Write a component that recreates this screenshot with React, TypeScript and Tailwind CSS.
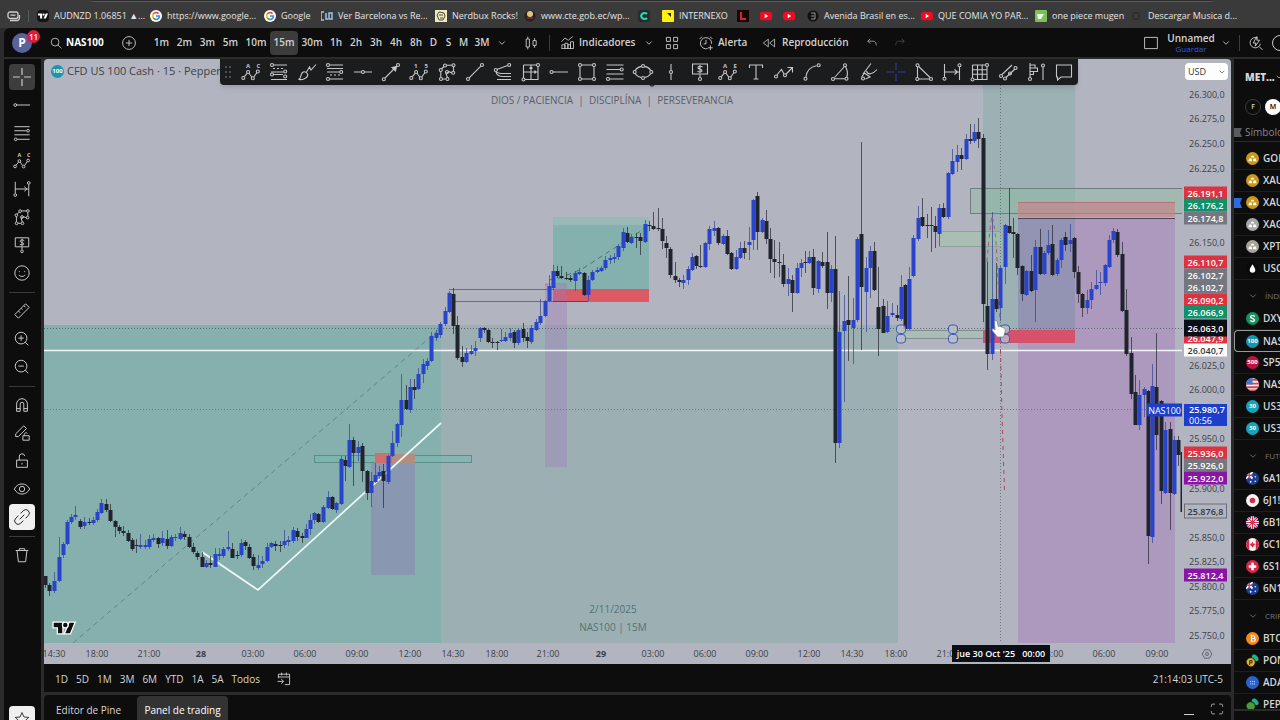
import React from "react";
import { ChevronDown } from "lucide-react";

/* ---------- chart geometry ---------- */
const PLOT = { x: 44, y: 59, w: 1138, h: 584 };
const left = (x: number) => `${((x - PLOT.x) / PLOT.w) * 100}%`;
const top = (y: number) => `${((y - PLOT.y) / PLOT.h) * 100}%`;

/* x, body top, body bottom, high, low, 1 = rising / 0 = falling */
type Candle = [number, number, number, number, number, 0 | 1];
const candles: Candle[] = [
  [45, 576, 585, 576, 588, 0], [49, 585, 591, 583, 596, 0], [54, 581, 591, 572, 593, 1], [59, 557, 581, 537, 582, 1],
  [63, 544, 555, 542, 558, 1], [67, 522, 544, 520, 545, 1], [71, 517, 522, 514, 524, 1], [75, 515, 517, 506, 520, 1],
  [80, 521, 527, 519, 529, 0], [84, 522, 526, 517, 529, 1], [89, 522, 523, 518, 525, 0], [93, 520, 523, 517, 525, 1],
  [97, 512, 520, 509, 522, 1], [101, 503, 513, 499, 514, 1], [106, 504, 510, 499, 512, 0], [110, 510, 521, 504, 522, 0],
  [115, 521, 527, 520, 537, 0], [119, 527, 531, 525, 534, 0], [123, 531, 533, 526, 536, 0], [128, 533, 541, 530, 542, 0],
  [132, 540, 549, 538, 551, 0], [136, 545, 546, 539, 553, 0], [140, 545, 547, 534, 549, 1], [145, 545, 547, 540, 549, 1],
  [149, 539, 547, 535, 549, 1], [153, 538, 540, 534, 542, 1], [158, 538, 544, 537, 548, 0], [162, 538, 543, 531, 546, 1],
  [167, 539, 546, 530, 549, 0], [171, 537, 546, 535, 547, 1], [175, 537, 538, 534, 541, 1], [180, 533, 539, 527, 540, 1],
  [184, 534, 537, 531, 540, 0], [189, 537, 547, 534, 548, 0], [193, 547, 552, 543, 554, 0], [197, 553, 557, 551, 560, 0],
  [202, 557, 567, 552, 567, 0], [206, 563, 567, 560, 568, 1], [210, 563, 565, 556, 568, 0], [215, 554, 567, 548, 567, 1],
  [219, 554, 556, 548, 560, 1], [223, 549, 556, 547, 558, 1], [228, 547, 549, 531, 551, 1], [232, 549, 558, 543, 558, 0],
  [237, 555, 556, 551, 559, 0], [241, 543, 555, 539, 557, 1], [245, 542, 546, 540, 550, 0], [249, 547, 558, 544, 559, 0],
  [253, 557, 566, 554, 570, 0], [258, 565, 568, 555, 570, 1], [262, 561, 564, 556, 568, 1], [267, 547, 561, 543, 562, 1],
  [271, 543, 547, 542, 548, 1], [275, 544, 546, 541, 551, 0], [280, 545, 546, 541, 552, 0], [284, 541, 545, 530, 548, 1],
  [288, 540, 542, 536, 546, 1], [293, 530, 541, 527, 543, 1], [297, 531, 537, 528, 541, 0], [302, 536, 538, 533, 543, 0],
  [306, 529, 538, 524, 538, 1], [310, 520, 529, 514, 535, 1], [314, 513, 520, 512, 524, 1], [318, 514, 522, 513, 523, 0],
  [323, 507, 522, 505, 523, 1], [328, 497, 508, 491, 509, 1], [332, 497, 509, 496, 510, 0], [336, 503, 510, 502, 513, 1],
  [341, 459, 504, 456, 505, 1], [345, 460, 466, 456, 481, 0], [349, 440, 467, 424, 468, 1], [353, 440, 453, 437, 486, 0],
  [358, 447, 453, 441, 461, 1], [362, 446, 471, 443, 482, 0], [367, 471, 493, 470, 500, 0], [371, 481, 493, 472, 507, 1],
  [375, 475, 482, 463, 483, 1], [379, 472, 476, 466, 479, 1], [383, 471, 481, 464, 508, 0], [388, 456, 482, 455, 484, 1],
  [392, 443, 456, 431, 457, 1], [397, 424, 443, 423, 447, 1], [401, 400, 425, 374, 437, 1], [406, 400, 409, 385, 410, 0],
  [410, 387, 410, 379, 413, 1], [414, 387, 390, 379, 399, 0], [418, 374, 389, 368, 390, 1], [423, 364, 374, 359, 383, 1],
  [427, 361, 366, 358, 370, 1], [431, 336, 361, 332, 362, 1], [436, 333, 338, 330, 341, 1], [440, 324, 335, 322, 338, 1],
  [445, 311, 324, 307, 326, 1], [449, 293, 312, 291, 313, 1], [453, 294, 326, 288, 334, 0], [457, 325, 358, 316, 360, 0],
  [462, 357, 362, 346, 367, 0], [466, 353, 362, 348, 363, 1], [471, 351, 354, 345, 355, 1], [475, 348, 351, 341, 356, 1],
  [480, 328, 338, 327, 342, 1], [484, 328, 330, 327, 333, 0], [488, 330, 342, 329, 343, 0], [492, 342, 343, 338, 348, 0],
  [497, 342, 343, 341, 350, 0], [501, 340, 341, 329, 342, 1], [505, 337, 341, 332, 342, 1], [510, 333, 338, 328, 341, 1],
  [514, 332, 343, 330, 348, 0], [518, 330, 343, 328, 345, 1], [523, 329, 338, 323, 342, 0], [527, 337, 341, 332, 348, 0],
  [531, 328, 342, 325, 344, 1], [536, 322, 330, 319, 331, 1], [540, 316, 323, 299, 325, 1], [545, 301, 316, 300, 317, 1],
  [549, 286, 301, 275, 302, 1], [553, 271, 288, 265, 290, 1], [557, 271, 276, 266, 278, 0], [561, 276, 278, 266, 279, 0],
  [566, 278, 279, 272, 280, 0], [570, 278, 280, 275, 282, 0], [575, 273, 281, 271, 291, 1], [579, 272, 274, 268, 275, 1],
  [584, 273, 295, 272, 296, 0], [588, 280, 295, 276, 301, 1], [592, 272, 280, 270, 281, 1], [597, 270, 272, 267, 273, 1],
  [601, 268, 271, 266, 272, 1], [605, 260, 268, 256, 270, 1], [610, 258, 260, 255, 264, 1], [614, 257, 259, 253, 263, 1],
  [618, 246, 257, 244, 260, 1], [623, 232, 248, 228, 251, 1], [627, 233, 242, 227, 243, 0], [631, 237, 243, 234, 244, 1],
  [636, 237, 238, 233, 248, 0], [640, 237, 241, 233, 255, 0], [645, 224, 242, 220, 243, 1], [649, 225, 226, 221, 231, 0],
  [653, 226, 229, 212, 230, 0], [658, 228, 229, 208, 231, 0], [662, 229, 241, 218, 249, 0], [666, 243, 248, 236, 258, 0],
  [670, 249, 275, 247, 278, 0], [675, 276, 280, 262, 283, 0], [679, 280, 282, 278, 287, 0], [683, 280, 283, 275, 289, 1],
  [688, 269, 280, 266, 285, 1], [692, 257, 270, 253, 271, 1], [696, 256, 266, 255, 269, 0], [700, 266, 267, 245, 268, 0],
  [705, 243, 267, 242, 268, 1], [709, 229, 244, 226, 250, 1], [714, 228, 231, 221, 236, 1], [718, 228, 243, 227, 245, 0],
  [723, 236, 244, 234, 245, 1], [727, 236, 254, 230, 255, 0], [731, 253, 269, 252, 270, 0], [736, 257, 269, 250, 270, 1],
  [740, 248, 258, 242, 259, 1], [744, 248, 253, 241, 259, 0], [749, 242, 245, 227, 260, 1], [753, 200, 240, 199, 250, 1],
  [757, 196, 232, 192, 250, 0], [762, 220, 232, 218, 233, 1], [766, 221, 239, 210, 244, 0], [770, 239, 259, 228, 273, 0],
  [774, 259, 262, 240, 278, 0], [779, 262, 263, 242, 277, 0], [783, 265, 284, 254, 287, 0], [788, 279, 284, 268, 296, 1],
  [792, 280, 293, 275, 312, 0], [797, 268, 293, 263, 294, 1], [801, 263, 268, 259, 277, 1], [805, 262, 263, 251, 273, 0],
  [809, 257, 263, 251, 264, 1], [813, 257, 288, 249, 295, 0], [818, 261, 289, 260, 293, 1], [822, 262, 266, 252, 268, 0],
  [827, 262, 293, 232, 309, 0], [831, 269, 293, 265, 302, 1], [835, 269, 443, 236, 463, 0], [839, 332, 443, 291, 448, 1],
  [844, 321, 331, 295, 402, 1], [848, 320, 325, 276, 361, 0], [853, 320, 328, 298, 364, 1], [857, 239, 320, 237, 322, 1],
  [861, 234, 287, 142, 350, 0], [866, 268, 292, 257, 332, 1], [870, 251, 268, 246, 298, 1], [874, 251, 290, 242, 291, 0],
  [878, 307, 329, 267, 356, 0], [883, 306, 333, 299, 333, 0], [887, 316, 332, 301, 333, 1], [892, 313, 315, 303, 317, 1],
  [897, 315, 318, 305, 321, 0], [901, 287, 319, 275, 321, 1], [905, 285, 329, 284, 330, 0], [909, 279, 329, 267, 330, 1],
  [913, 238, 276, 235, 277, 1], [918, 218, 239, 206, 241, 1], [922, 217, 226, 198, 227, 0], [927, 225, 226, 214, 238, 0],
  [931, 225, 226, 207, 252, 0], [935, 226, 232, 216, 248, 0], [939, 208, 234, 204, 246, 1], [943, 208, 217, 203, 218, 0],
  [948, 173, 217, 172, 219, 1], [952, 161, 174, 149, 175, 1], [957, 155, 162, 145, 172, 1], [961, 155, 159, 148, 170, 0],
  [966, 139, 159, 134, 160, 1], [970, 139, 141, 124, 144, 0], [974, 132, 141, 124, 143, 1], [978, 132, 139, 118, 148, 0],
  [983, 138, 304, 134, 322, 0], [987, 306, 354, 262, 370, 0], [992, 299, 354, 212, 360, 1], [996, 299, 309, 263, 312, 0],
  [1000, 268, 308, 266, 321, 1], [1005, 225, 267, 224, 284, 1], [1009, 226, 233, 188, 234, 0], [1013, 232, 234, 218, 258, 0],
  [1017, 234, 268, 233, 275, 0], [1022, 266, 294, 265, 301, 0], [1026, 271, 295, 270, 296, 1], [1031, 271, 291, 255, 292, 0],
  [1035, 247, 290, 240, 322, 1], [1040, 247, 274, 229, 275, 0], [1044, 253, 274, 251, 275, 1], [1048, 245, 253, 230, 255, 1],
  [1052, 244, 275, 225, 276, 0], [1057, 260, 274, 258, 276, 1], [1061, 240, 260, 238, 268, 1], [1065, 237, 245, 232, 251, 0],
  [1070, 240, 244, 224, 252, 1], [1074, 238, 272, 237, 278, 0], [1078, 272, 294, 266, 303, 0], [1082, 294, 308, 293, 317, 0],
  [1087, 300, 308, 290, 314, 1], [1091, 289, 300, 282, 309, 1], [1096, 285, 289, 270, 290, 1], [1100, 282, 283, 272, 295, 1],
  [1105, 265, 283, 264, 286, 1], [1109, 240, 267, 235, 268, 1], [1113, 231, 240, 228, 243, 1], [1117, 232, 255, 229, 257, 0],
  [1122, 254, 311, 242, 312, 0], [1126, 310, 354, 289, 356, 0], [1131, 353, 394, 337, 399, 0], [1135, 392, 425, 375, 425, 0],
  [1139, 395, 425, 380, 430, 1], [1144, 389, 395, 387, 417, 1], [1148, 391, 536, 390, 564, 0], [1152, 386, 537, 364, 543, 1],
  [1156, 387, 435, 333, 450, 0], [1161, 401, 491, 400, 504, 0], [1165, 430, 493, 422, 494, 1], [1170, 429, 493, 422, 530, 0],
  [1174, 440, 494, 436, 495, 1], [1178, 440, 455, 436, 466, 0], [1182, 452, 512, 451, 512, 0],
];

const Rect = ({ b, fill, o = 1, stroke }: { b: number[]; fill: string; o?: number; stroke?: string }) => (
  <rect x={b[0]} y={b[1]} width={b[2] - b[0]} height={b[3] - b[1]} fill={fill} fillOpacity={o} stroke={stroke} strokeWidth={stroke ? 1 : 0} />
);

const Plot = () => (
  <svg className="absolute inset-0 h-full w-full" viewBox={`${PLOT.x} ${PLOT.y} ${PLOT.w} ${PLOT.h}`} preserveAspectRatio="none" role="img" aria-label="NAS100, 15 minutos">
    <Rect b={[44, 325, 441, 643]} fill="#85b0ad" />
    <Rect b={[441, 325, 898, 643]} fill="#9cb0b4" />
    <Rect b={[553, 217, 649, 226]} fill="#99b8b8" />
    <Rect b={[553, 225, 649, 290]} fill="#84b1ad" />
    <Rect b={[553, 289, 649, 302]} fill="#dc5a64" />
    <Rect b={[545, 283, 567, 467]} fill="#a078b8" o={0.38} />
    <Rect b={[371, 463, 415, 575]} fill="#8997b0" />
    <Rect b={[314.5, 455.5, 471.5, 462.5]} fill="#6fbcae" o={0.4} stroke="#5c8c8b" />
    <Rect b={[375, 453, 392, 463]} fill="#cf6f6c" />
    <Rect b={[392, 454, 415, 463]} fill="#b08f80" />
    <Rect b={[983, 59, 1075, 330]} fill="#9bb1b4" />
    <Rect b={[1018, 218, 1175, 643]} fill="#ac99bd" />
    <Rect b={[1018, 218, 1075, 330]} fill="#9393b4" />
    <Rect b={[970.5, 188.5, 1200, 213.5]} fill="#8fbc9f" o={0.45} stroke="#6f7c85" />
    <Rect b={[1018, 202, 1175, 217]} fill="#c98287" o={0.65} />
    <path d="M1018 202.5H1175" stroke="#b5727d" />
    <path d="M1018 218.5H1175" stroke="#4a4656" />
    <Rect b={[939, 231.5, 1001, 246.5]} fill="#9fc9a8" o={0.5} />
    <path d="M939 231.5H1001M939 246.5H1001" stroke="#8aa297" fill="none" />
    <Rect b={[901, 330, 985, 338]} fill="#9fc9b0" o={0.4} />
    <path d="M901 330.5H985M901 338.5H985" stroke="#7f8f90" />
    <Rect b={[983, 330, 1075, 343]} fill="#d6526a" />
    <path d="M449 289.5H553M453 301.5H553" stroke="#6b6e77" />
    <path d="M553 301.5H588" stroke="#6d3c46" />
    <path d="M73 643L441 328" stroke="#638584" strokeDasharray="5 4" fill="none" />
    <path d="M549 280L560 278L582 269L647 227" stroke="#4f7573" strokeDasharray="5 4" fill="none" />
    <path d="M545 285L553 283L565 284" stroke="#c97878" strokeDasharray="3 3" fill="none" />
    <path d="M44 350.5H1182" stroke="#f2f5f7" strokeWidth="1.4" />
    <path d="M44 409.5H1148" stroke="#5b78b8" strokeDasharray="1 2" />
    <path d="M44 328.5H1182" stroke="#5c6a72" strokeDasharray="1 2" />
    <path d="M1000.5 85V643" stroke="#6d7780" strokeDasharray="1 2" />
    <path d="M202 552L258 590L441 423" stroke="#eef8f7" strokeWidth="1.7" fill="none" />
    {candles.map(([x, t, b, hi, lo, up]) => (
      <g key={x} fill={up ? "#2843cc" : "#20242f"}>
        <rect x={x} y={hi} width={1} height={lo - hi} fill={up ? "#39499a" : "#2c3038"} fillOpacity={0.75} />
        <rect x={x - 1.5} y={t} width={4} height={Math.max(1, b - t)} />
      </g>
    ))}
    <path d="M987 262Q990 225 992 216Q996 230 997 262L1000 320" stroke="#b0566f" strokeDasharray="4 4" fill="none" />
    <path d="M1000.5 350L1002 415L1004.500 491" stroke="#b5405c" strokeDasharray="4 4" fill="none" />
    {[901, 953, 1005].map((x) => (
      <g key={x} fill="#b9bfca" fillOpacity="0.8" stroke="#3b56b5">
        <rect x={x - 4.5} y={325} width={9} height={8.5} rx={3} />
        <rect x={x - 4.5} y={334.5} width={9} height={8.5} rx={3} />
      </g>
    ))}
    <path d="M994.500 321c1.600-.8 2.800.2 3 1.500l.7 4 1-.3c1 0 1.500.3 2 .8 1-.2 1.800.2 2.200 1 1.300 0 1.800.8 1.800 1.800 0 2.600-.7 4.200-1.700 7.200h-6.200c-1.600-2.500-3.800-4.500-5.200-6.800-.2-1.600 1.600-1.800 3-.4z" fill="#fff" stroke="#70757f" strokeWidth=".7" />
    <path d="M650 85q2 2 4 0" stroke="#3c3f49" strokeWidth="1.5" fill="none" />
  </svg>
);

/* ---------- drawing-tool icons ---------- */
type IconDef = { d: string; n?: number[][]; l?: [string, string]; cls?: string; f?: string };
const ZIGZAG = { d: "M3.300 14.700L6.200 11.300M8 11.300L10.700 15M12.800 15L15.800 10.700", n: [[2.300, 16], [7.100, 10], [11.800, 16.200], [16.800, 9.500]] };
const I: Record<string, IconDef> = {
  abc: { ...ZIGZAG, l: ["A", "C"] },
  wave: { ...ZIGZAG, l: ["1", "5"] },
  abe: { d: "M3.300 14.700L6.200 11.300M8 11.300L10.700 15M12.800 15L15.800 10.700", n: [[2.300, 16], [7.100, 10], [11.800, 16.200], [16.800, 9.500]], l: ["A", "E"] },
  fibext: { d: "M4.600 3H18M4 6.500H6M8 6.500H10M12 6.500H14M2 10H14.500M4.600 12.500H14M2 17.500H18", n: [[3, 3], [16.200, 9.500], [3, 12.500], [16.200, 14.500]] },
  fibtime: { d: "M4.600 3H18M2 6.500H18M2 10H14.500M5 13H7M9 13H11M13 13H15M4.600 17H18", n: [[3, 3], [16.200, 10], [3, 17]] },
  brush: { d: "M1.500 17.500C4.500 16.500 3 13 5.500 10.500C7.500 8.500 11.500 11 10.500 14C9.500 17 5 18 1.500 17.500ZM9.500 10L12.500 5L14 8L19 2.500" },
  hline: { d: "M1 10H8.300M11.700 10H19", n: [[10, 10]] },
  arrow: { d: "M4 16L15.500 4.500", n: [[2.800, 17.200], [17, 3]], f: "M15.500 4.500L14.500 9L11 5.500Z" },
  path: { d: "M4.500 7L7 4.500M9.600 3.300L14.900 3.200M16.500 5V9M15 11L12 9.700L9 11.500L10.500 15.800M8.800 17H5.500M3.800 15.400V9.700", n: [[3.700, 8], [8, 3.500], [16.500, 3.300], [16.200, 10.700], [10, 10], [10.500, 17], [4, 17]] },
  trend: { d: "M4.200 15.800L15.800 4.200", n: [[3, 17], [17, 3]] },
  fan: { d: "M4 7.500L14.500 3.500M3 9.500C5 12 8 11.500 18 11.500M3 10C4 15 8 14.500 18 14.500M4 17.500H18", n: [[2.800, 8], [16.200, 3]] },
  pos: { d: "M2.500 3H15.500M17 4.500V17.500H4M2.500 16V3M10 3V17.500M2.500 10H17M8.500 6.500L10 5L11.500 6.500M13.500 8.500L15 10L13.500 11.500", n: [[17, 3], [2.500, 17.500]] },
  ray: { d: "M4 10H19", n: [[2.500, 10]] },
  rect: { d: "M4.700 3H15.300M4.700 17H15.300M3 4.700V15.300M17 4.700V15.300", n: [[3, 3], [17, 3], [3, 17], [17, 17]] },
  fib: { d: "M1.500 3H18.500M1.500 7.500H15M1.500 12H18.500M4.700 17H18.500", n: [[16.700, 7.500], [3, 17]] },
  ellipse: { d: "M2 8.500C3.500 6.500 6 4.700 8.500 4.400M11.500 4.400C14 4.700 16.500 6.500 18 8.500M2 11.500C3.500 13.500 6 15.300 8.500 15.600M11.500 15.600C14 15.300 16.500 13.500 18 11.500", n: [[1.700, 10], [18.300, 10], [10, 4], [10, 16]] },
  vline: { d: "M10 2V8.300M10 11.700V18", n: [[10, 10]] },
  note: { d: "M2.500 2H17.500V12H2.500ZM10 12V15M12.500 5.200C11 3.700 7.500 4.200 8 6C8.500 7.700 12 7 12 8.700C12 10.200 9 10.500 7.500 9.200M10 3V11", n: [[10, 17]] },
  text: { d: "M3.500 6V3H16.500V6M10 3V17M7.500 17H12.500" },
  zig: { d: "M3 13L6 9L7.500 7.500L10 12M12.200 12L18 6M13.500 5.500H18.500V10.500", n: [[2, 14.500], [11, 13.300]] },
  arc: { d: "M4 15C4.500 9 8 5 14.500 3.700", n: [[3.500, 16.700], [16.700, 3.200]] },
  shape: { d: "M4.500 15.500L14 5M5 16.700H14.800M15.500 4.800C17.500 8 17.800 12 16.800 15.200", n: [[3, 17], [15, 3.200], [16.500, 16.800]] },
  pitch: { d: "M5 12L13 1.500M3.700 15L6.500 11L12 15L7.500 17M8.500 9C10 13.500 14.500 12.500 19 7.500", n: [[5, 16.500]] },
  cross: { d: "M10 1V8M10 12V19M1 10H8M12 10H19", cls: "text-[#3038b8]" },
  tri: { d: "M3.500 5V15.300M5 17H15.300M4.700 4.500L16 15.500", n: [[3.500, 3.200], [3.300, 17], [17, 17]] },
  range: { d: "M2.500 2V15M17.500 5V18M2.500 10H17M12.500 7.500L15.500 10L12.500 12.500", n: [[2.500, 16.700], [17.500, 3.300]] },
  grid: { d: "M2.500 3H15.300M17 4.700V17.500H4.200M2.500 15.800V3M2.500 7.700H17M2.500 12.300H17M7.500 3V17.500M12.200 3V17.500", n: [[17, 3], [2.500, 17.500]] },
  channel: { d: "M4 12.500L14 3M8 15.500L17 7", n: [[3, 14], [7, 16.500], [12, 11.500], [17.500, 6]] },
  vp: { d: "M4 1V15.500M4 3H9V6H4M4 6H11.500V9.500H4M4 12.500H7.500V9.500M17 5V18", n: [[17, 3.500], [4, 17]] },
  comment: { d: "M2.500 3H17.500V15H7L3.500 18V15H2.500Z" },
  smile: { d: "M10 2A8 8 0 1 0 10 18A8 8 0 1 0 10 2ZM7 8V9M13 8V9M6.500 12C8 14.500 12 14.500 13.500 12" },
  ruler: { d: "M2 14L14 2L18 6L6 18ZM6 10L8 12M9 7L10.500 8.500M12 4L14 6" },
  zin: { d: "M9 2.500A6.500 6.500 0 1 0 9 15.500A6.500 6.500 0 1 0 9 2.500ZM13.500 13.500L17 17M6 9H12M9 6V12" },
  zout: { d: "M9 2.500A6.500 6.500 0 1 0 9 15.500A6.500 6.500 0 1 0 9 2.500ZM13.500 13.500L17 17M6 9H12" },
  magnet: { d: "M4 17V9A6 6 0 0 1 16 9V17H12V9A2 2 0 0 0 8 9V17ZM4 14H8M12 14H16" },
  penlock: { d: "M3 14L3 11L12 2L15 5L6 14ZM11 13H18V18H11ZM12.500 13V11.500A2 2 0 0 1 16 10.500" },
  lock: { d: "M4 9H16V17H4ZM7 9V5.500A3 3 0 0 1 13 4.500M10 12V14" },
  eye: { d: "M1.500 10C5 2.500 15 2.500 18.500 10C15 17.500 5 17.500 1.500 10ZM10 7A3 3 0 1 0 10 13A3 3 0 1 0 10 7Z" },
  link: { d: "M8.500 6L11.500 3A3.500 3.500 0 0 1 17 8.500L14 11.500M11.500 14L8.500 17A3.500 3.500 0 0 1 3 11.500L6 8.500M7.500 12.500L12.500 7.500" },
  trash: { d: "M3 5H17M7 5V3H13V5M4.500 5L6 17.500H14L15.500 5" },
  star: { d: "M10 2L12.500 7.500L18.500 8L14 12L15.500 18L10 15L4.500 18L6 12L1.500 8L7.500 7.500Z" },
  search: { d: "M8.500 2A6.500 6.500 0 1 0 8.500 15A6.500 6.500 0 1 0 8.500 2ZM13 13L19 19" },
  plus: { d: "M10 2A8 8 0 1 0 10 18A8 8 0 1 0 10 2ZM6 10H14M10 6V14" },
  bars: { d: "M4 5H8V15H4ZM6 2V5M6 15V18M12.500 7H16.500V13H12.500ZM14.500 4V7M14.500 13V16" },
  indic: { d: "M2.500 18V13H6.500V18M6.500 18V11H10.500V18M10.500 18V13H14V18M14 18V9H18V18M2 18H18M2 9L6.500 4L11 7L17 2" },
  four: { d: "M3 3H8V8H3ZM12 3H17V8H12ZM3 12H8V17H3ZM12 12H17V17H12Z" },
  alarm: { d: "M12 17A7 7 0 1 1 17 11M10 6V11H7M2 5L5 2M15 2L18 5M15.500 13V19M12.500 16H18.500" },
  rewind: { d: "M9 4.500V15.500L2 10ZM18 4.500V15.500L11 10Z" },
  undo: { d: "M7 3L3 7L7 11M3 7H12C16 7 17 10 17 14" },
  redo: { d: "M13 3L17 7L13 11M17 7H8C4 7 3 10 3 14" },
  layout: { d: "M2 3H18V17H2Z" },
  bolt: { d: "M12.500 4A6.500 6.500 0 1 0 15.500 11M14 14.500L18 18.500M11 2L6.500 10H10L9 14L14.500 6.500H11Z" },
  calendar: { d: "M3 9V4H17V17H11M3 7.500H17M7 2V5.500M13 2V5.500M2 13H9M6.500 10L9.500 13L6.500 16" },
  full: { d: "M2 7V5Q2 3 4 3H7M13 3H16Q18 3 18 5V7M18 13V15Q18 17 16 17H13M7 17H4Q2 17 2 15V13" },
  gear: { d: "M6 3H14L18 10L14 17H6L2 10ZM10 7.500A2.500 2.500 0 1 0 10 12.500A2.500 2.500 0 1 0 10 7.500Z" },
};

const Icon = ({ name, className = "h-5 w-5" }: { name: string; className?: string }) => {
  const i = I[name];
  return (
    <svg viewBox="0 0 20 20" className={`shrink-0 overflow-visible ${className} ${i.cls ?? ""}`} fill="none" stroke="currentColor" strokeWidth="1.1" aria-hidden="true">
      <path d={i.d} />
      {i.f && <path d={i.f} fill="currentColor" />}
      {i.n?.map(([x, y]) => <circle key={`${x}-${y}`} cx={x} cy={y} r="1.5" />)}
      {i.l && (
        <g fill="currentColor" stroke="none" fontSize="6" fontWeight="700">
          <text x="5" y="5.500">{i.l[0]}</text>
          <text x="15.500" y="5.500">{i.l[1]}</text>
        </g>
      )}
    </svg>
  );
};

/* ---------- bookmarks ---------- */
const Google = () => (
  <svg viewBox="0 0 14 14" className="h-3 w-3 shrink-0"><circle cx="7" cy="7" r="7" fill="#fff" />
    <g fill="none" strokeWidth="1.900"><path d="M10 4.200A4 4 0 0 0 3.600 5" stroke="#ea4335" /><path d="M3.600 5A4 4 0 0 0 3.600 9" stroke="#fbbc05" /><path d="M3.600 9A4 4 0 0 0 9.500 10.200" stroke="#34a853" /><path d="M9.500 10.200A4 4 0 0 0 11 7H7" stroke="#4285f4" /></g></svg>
);
const YouTube = () => (
  <svg viewBox="0 0 14 14" className="h-3 w-3 shrink-0"><rect y="2" width="14" height="10" rx="3" fill="#f00a22" /><path d="M5.500 4.500L9.500 7L5.500 9.500Z" fill="#fff" /></svg>
);
const TvMark = ({ className }: { className: string }) => (
  <svg viewBox="0 0 24 12" className={className}><path d="M0 0H10V12H5V5H0ZM24 0L19 12H13.500L18.500 0Z" fill="currentColor" /><circle cx="13.500" cy="2.600" r="2.600" fill="currentColor" /></svg>
);
const bookmarks: { w: string; icon: React.ReactNode; t?: string }[] = [
  { w: "w-[113px]", icon: <span className="flex h-3 w-3 shrink-0 items-center justify-center rounded-sm bg-[#131313]"><TvMark className="h-1.5 w-2.5 text-white" /></span>, t: "AUDNZD 1.06851 ▲..." },
  { w: "w-[114px]", icon: <Google />, t: "https://www.google..." },
  { w: "w-[57px]", icon: <Google />, t: "Google" },
  { w: "w-[114px]", icon: <svg viewBox="0 0 12 12" className="h-3 w-3 shrink-0"><path d="M3 2H0V10H3M5 3V9H7M8 3H11V9H8Z" fill="none" stroke="#9fc4e8" strokeWidth="1.500" /></svg>, t: "Ver Barcelona vs Re..." },
  { w: "w-[89px]", icon: <svg viewBox="0 0 12 12" className="h-3 w-3 shrink-0"><rect width="12" height="12" fill="#efe9c4" /><path d="M2 5L4 2L9 3L10 6L8 10H4ZM4 5H8M5 8H8" fill="none" stroke="#4d4a33" /></svg>, t: "Nerdbux Rocks!" },
  { w: "w-[114px]", icon: <svg viewBox="0 0 12 12" className="h-3 w-3 shrink-0"><circle cx="6" cy="6" r="5.500" fill="#2b2020" /><circle cx="6" cy="4" r="3" fill="#e0c589" /><path d="M3 8H9" stroke="#c0392b" /></svg>, t: "www.cte.gob.ec/wp..." },
  { w: "w-6", icon: <svg viewBox="0 0 12 12" className="h-3 w-3 shrink-0"><rect width="12" height="12" rx="3" fill="#262a2a" /><path d="M9 4A3.300 3 0 1 0 9 8" fill="none" stroke="#27d7a8" strokeWidth="2.200" /></svg> },
  { w: "w-[75px]", icon: <svg viewBox="0 0 12 12" className="h-3 w-3 shrink-0"><rect width="12" height="12" rx="1" fill="#fbf010" /><path d="M5 3H9V7Z" fill="#222" /></svg>, t: "INTERNEXO" },
  { w: "w-[23px]", icon: <svg viewBox="0 0 12 12" className="h-3 w-3 shrink-0"><rect width="12" height="12" fill="#160707" /><path d="M4 2V9H9" fill="none" stroke="#e02222" strokeWidth="2" /></svg> },
  { w: "w-[23px]", icon: <YouTube /> },
  { w: "w-6", icon: <YouTube /> },
  { w: "w-[114px]", icon: <svg viewBox="0 0 12 12" className="h-3 w-3 shrink-0"><circle cx="6" cy="6" r="5.500" fill="#111" /><path d="M4 3H8V9H4M4 6H7" fill="none" stroke="#999" /></svg>, t: "Avenida Brasil en es..." },
  { w: "w-[114px]", icon: <YouTube />, t: "QUE COMIA YO PAR..." },
  { w: "w-24", icon: <svg viewBox="0 0 12 12" className="h-3 w-3 shrink-0"><rect width="12" height="12" rx="1" fill="#7cc05a" /><path d="M2 4H9L6 9H3Z" fill="#eef7e6" /></svg>, t: "one piece mugen" },
  { w: "w-[114px]", icon: <svg viewBox="0 0 12 12" className="h-3 w-3 shrink-0"><circle cx="5" cy="6" r="3.500" fill="none" stroke="#222" /></svg>, t: "Descargar Musica d..." },
];

/* ---------- top bar ---------- */
const frames: [string, string][] = [
  ["1m", "w-[23px]"], ["2m", "w-[23px]"], ["3m", "w-[23px]"], ["5m", "w-[23px]"], ["10m", "w-7"], ["15m", "w-7"], ["30m", "w-7"],
  ["1h", "w-5"], ["2h", "w-5"], ["3h", "w-5"], ["4h", "w-5"], ["8h", "w-5"], ["D", "w-[15px]"], ["S", "w-[15px]"], ["M", "w-[15px]"], ["3M", "w-[22px]"],
];
const Sep = () => <span className="h-4 w-px shrink-0 bg-[#3b3b3b]" />;
const Chevron = ({ className }: { className: string }) => (
  <button aria-label="Más opciones" className={`flex shrink-0 justify-center ${className}`}><ChevronDown className="h-2.5 w-2.5" /></button>
);

const TopBar = () => (
  <header className="ml-1 flex h-[29px] shrink-0 items-center overflow-hidden rounded-tl-md bg-[#0d0d0d] text-[10px] font-semibold text-[#d2d2d2]">
    <button aria-label="Perfil" className="relative flex h-full w-9 shrink-0 items-center pl-2">
      <span className="flex h-5 w-5 items-center justify-center rounded-full bg-[#5a629c] text-xs font-bold text-white">P</span>
      <span className="absolute top-0.5 right-0 flex h-[13px] w-[13px] items-center justify-center rounded-full bg-[#e0193f] text-[8px] text-white">11</span>
    </button>
    <button className="flex w-[74px] shrink-0 items-center gap-1 pl-2 font-bold text-white">
      <Icon name="search" className="ml-0.5 h-3 w-3" />NAS100
    </button>
    <button aria-label="Comparar" className="flex w-[29px] shrink-0 justify-center"><Icon name="plus" className="h-4 w-4" /></button>
    <span className="ml-[3px]"><Sep /></span>
    <nav className="ml-1 flex items-center">
      {frames.map(([t, w]) => (
        <button key={t} className={`flex h-6 shrink-0 items-center justify-center rounded ${w} ${t === "15m" ? "bg-[#3c3c3c]" : ""}`}>{t}</button>
      ))}
    </nav>
    <Chevron className="w-[18px]" />
    <span className="ml-0.5"><Sep /></span>
    <button aria-label="Velas" className="flex w-9 shrink-0 justify-center"><Icon name="bars" className="h-4 w-4" /></button>
    <Sep />
    <button className="ml-2.5 flex w-[78px] shrink-0 items-center gap-1"><Icon name="indic" className="h-[15px] w-[15px]" />Indicadores</button>
    <Chevron className="w-[22px]" />
    <button aria-label="Plantillas" className="flex w-6 shrink-0 justify-center"><Icon name="four" className="h-4 w-4" /></button>
    <span className="ml-1.5"><Sep /></span>
    <button className="ml-2 flex w-16 shrink-0 items-center gap-1"><Icon name="alarm" className="h-4 w-4" />Alerta</button>
    <button className="flex w-[86px] shrink-0 items-center gap-1.5"><Icon name="rewind" className="h-3.5 w-3.5" />Reproducción</button>
    <span className="ml-2"><Sep /></span>
    <button aria-label="Deshacer" className="flex w-8 shrink-0 justify-center"><Icon name="undo" className="h-3 w-3" /></button>
    <button aria-label="Rehacer" className="flex w-6 shrink-0 justify-center text-[#5a5a5a]"><Icon name="redo" className="h-3 w-3" /></button>
    <div className="flex-1" />
    <button aria-label="Disposición" className="flex w-[26px] shrink-0 items-center"><Icon name="layout" className="h-4 w-4" /></button>
    <button className="flex w-11 shrink-0 flex-col items-center">
      <span className="leading-[11px]">Unnamed</span>
      <span className="text-[8px] leading-[9px] font-normal text-[#3453e8]">Guardar</span>
    </button>
    <Chevron className="w-[26px]" />
    <Sep />
    <button aria-label="Búsqueda rápida" className="flex w-8 shrink-0 justify-center"><Icon name="bolt" className="h-4 w-4" /></button>
    <span className="-mr-2 h-4 w-4 shrink-0 rounded-full border border-[#c8c8c8]" />
  </header>
);

/* ---------- left rail ---------- */
const railGroups = [["cross", "ray", "fib", "abc", "range", "path", "note", "smile"], ["ruler", "zin", "zout"], ["magnet", "penlock", "lock", "eye", "link"], ["trash"]];
const Rail = () => (
  <aside className="ml-1 flex w-[37px] shrink-0 flex-col items-center overflow-hidden bg-[#0d0d0d] pt-1 pr-px text-[#c8c8c8]">
    {railGroups.map((g, gi) => (
      <React.Fragment key={gi}>
        {gi > 0 && <div className="flex h-2.5 shrink-0 items-center"><span className="h-px w-[26px] bg-[#3a3a3a]" /></div>}
        {g.map((n, i) => (
          <button key={n} aria-label={n} className="flex h-7 shrink-0 items-center justify-center">
            <span className={`flex h-[26px] w-[26px] items-center justify-center rounded ${gi === 0 && i === 0 ? "bg-[#3d3d3d]" : n === "link" ? "bg-[#f0f0f0] text-[#222]" : ""}`}>
              {n === "cross" ? (
                <svg viewBox="0 0 20 20" className="h-5 w-5" stroke="currentColor" strokeWidth="1.200"><path d="M10 1V8M10 12V19M1 10H8M12 10H19" /></svg>
              ) : <Icon name={n} className="h-[18px] w-[18px]" />}
            </span>
          </button>
        ))}
      </React.Fragment>
    ))}
    <div className="flex-1" />
    <button aria-label="Favoritos" className="-mb-3 flex h-[26px] w-[26px] shrink-0 items-center justify-center rounded bg-[#f0f0f0] text-[#222]"><Icon name="star" className="h-4 w-4" /></button>
  </aside>
);

/* ---------- floating favourites toolbar ---------- */
const favourites = ["abc", "fibext", "brush", "fibtime", "hline", "arrow", "wave", "path", "trend", "fan", "pos", "ray", "rect", "fib", "ellipse", "vline", "note", "abe", "text", "zig", "arc", "shape", "pitch", "cross", "tri", "range", "grid", "channel", "vp", "comment"];
const Favourites = () => (
  <div className="absolute top-0 left-44 z-20 flex h-[26px] w-[858px] items-center justify-between rounded-b bg-[#1b1c1e] pl-1 text-[#c6c6c6] shadow-md">
    <svg viewBox="0 0 8 14" className="h-3.5 w-2 shrink-0" fill="#5f6063">{[2, 7, 12].map((y) => <g key={y}><circle cx="2" cy={y} r="1" /><circle cx="6" cy={y} r="1" /></g>)}</svg>
    <div className="flex w-[841px] justify-between">
      {favourites.map((n) => <button key={n} aria-label={n} className="flex h-6 w-7 shrink-0 items-center justify-center"><Icon name={n} /></button>)}
    </div>
  </div>
);

/* ---------- axes ---------- */
const ticks: [number, string][] = [[95, "26.300,0"], [119, "26.275,0"], [144, "26.250,0"], [169, "26.225,0"], [243, "26.150,0"], [366, "26.025,0"], [390, "26.000,0"], [439, "25.950,0"], [489, "25.900,0"], [538, "25.850,0"], [562, "25.825,0"], [587, "25.800,0"], [611, "25.775,0"], [636, "25.750,0"]];
const RED = "bg-[#dd3340] text-white", GREEN = "bg-[#129069] text-white", GRAY = "bg-[#757780] text-white", PURPLE = "bg-[#8a14a4] text-white";
const tags: [number, string, string][] = [
  [193, "26.191,1", RED], [205, "26.176,2", GREEN], [218, "26.174,8", GRAY], [262, "26.110,7", RED], [275, "26.102,7", GRAY], [287, "26.102,7", GRAY],
  [300, "26.090,2", RED], [312, "26.066,9", GREEN], [338, "26.047,9", RED], [328, "26.063,0", "bg-[#0c0e15] text-white py-0.5"], [350, "26.040,7", "bg-white text-[#33363f] font-normal"],
  [453, "25.936,0", RED], [465, "25.926,0", GRAY], [478, "25.922,0", PURPLE], [511, "25.876,8", "border border-[#6a6d75] text-[#33363f] font-normal"], [575, "25.812,4", PURPLE],
];
const hours: [number, string][] = [[54, "14:30"], [97, "18:00"], [149, "21:00"], [201, "28"], [253, "03:00"], [305, "06:00"], [357, "09:00"], [410, "12:00"], [453, "14:30"], [497, "18:00"], [548, "21:00"], [601, "29"], [653, "03:00"], [705, "06:00"], [757, "09:00"], [809, "12:00"], [852, "14:30"], [896, "18:00"], [948, "21:00"], [1052, "03:00"], [1104, "06:00"], [1157, "09:00"]];

const Chart = () => (
  <section className="relative flex min-h-0 flex-1 flex-col overflow-hidden rounded-t bg-[#b2b5c0] text-[9px] text-[#3c3f49]">
    <div className="flex min-h-0 flex-1">
      <div className="relative min-w-0 flex-1">
        <Plot />
        <h1 className="absolute top-1 left-[7px] flex w-[170px] items-center gap-[3px] overflow-hidden text-[11px] leading-4 whitespace-nowrap">
          <span className="flex h-[13px] w-[13px] shrink-0 items-center justify-center rounded-full bg-[#1c95ab] text-[6px] font-bold text-white">100</span>
          CFD US 100 Cash · 15 · Pepper
        </h1>
        <p className="absolute -translate-1/2 text-[10px] whitespace-pre text-[#5a5e69]" style={{ left: left(612), top: top(100) }}>{"DIOS / PACIENCIA  |  DISCIPLÍNA  |  PERSEVERANCIA"}</p>
        <p className="absolute -translate-1/2 text-[10px] whitespace-nowrap text-[#55706f]" style={{ left: left(613), top: top(609) }}>2/11/2025</p>
        <p className="absolute -translate-1/2 text-[10px] whitespace-nowrap text-[#55706f]" style={{ left: left(613), top: top(627) }}>NAS100 | 15M</p>
        <svg viewBox="-2 -2 28 16" className="absolute bottom-[7px] left-2 h-4 w-6"><g fill="#0e0e0e" stroke="#fff" strokeWidth="3" paintOrder="stroke"><path d="M0 0H10V12H5V5H0ZM24 0L19 12H13.500L18.500 0Z" /><circle cx="13.500" cy="2.600" r="2.600" /></g></svg>
        <span className="absolute right-0 flex h-[13px] -translate-y-1/2 items-center bg-[#1c3fcb] px-px font-medium text-white" style={{ top: top(410) }}>NAS100</span>
      </div>
      <div className="relative w-[49px] shrink-0">
        <div className="absolute top-1 left-[3px] z-10 h-[17px] w-[43px]">
          <select aria-label="Divisa" className="h-full w-full appearance-none rounded-sm bg-white pl-[3px] text-[9px] text-[#33363f]"><option>USD</option></select>
          <ChevronDown className="pointer-events-none absolute top-[5px] right-0.5 h-2 w-2" />
        </div>
        {ticks.map(([y, t]) => <span key={t} className="absolute left-[7px] -translate-y-1/2 leading-3" style={{ top: top(y) }}>{t}</span>)}
        {tags.map(([y, t, c]) => <span key={y} className={`absolute left-0.5 w-[43px] -translate-y-1/2 text-center leading-[13px] font-semibold ${c}`} style={{ top: top(y) }}>{t}</span>)}
        <div className="absolute left-0.5 w-[43px] -translate-y-1/2 bg-[#1c3fcb] pl-[5px] leading-[11px] text-white" style={{ top: top(415) }}><b className="font-semibold">25.980,7</b><br />00:56</div>
      </div>
    </div>
    <div className="flex h-[21px] shrink-0">
      <div className="relative min-w-0 flex-1">
        {hours.map(([x, t]) => <span key={x} className={`absolute top-[5px] -translate-x-1/2 leading-3 ${t.length < 3 ? "font-bold" : ""}`} style={{ left: left(x) }}>{t}</span>)}
        <span className="absolute top-0.5 flex h-[17px] w-[98px] -translate-x-1/2 items-center justify-center bg-[#0c0e15] font-semibold whitespace-pre text-white" style={{ left: left(1001) }}>{"jue 30 Oct '25   00:00"}</span>
      </div>
      <button aria-label="Ajustes" className="flex w-[49px] items-center justify-center"><Icon name="gear" className="h-3 w-3" /></button>
    </div>
    <Favourites />
  </section>
);

/* ---------- watch list ---------- */
const Flag = ({ children }: { children: React.ReactNode }) => (
  <svg viewBox="0 0 14 14" className="h-[13px] w-[13px] shrink-0 overflow-hidden rounded-full">{children}</svg>
);
const Bars = ({ c }: { c: string }) => <Flag><rect width="14" height="14" fill={c} /><path d="M5 6L6 4H8L9 6ZM2.500 10L3.500 7H6L6.500 10ZM7.500 10L8 7H10.500L11.500 10Z" fill="#fff" /></Flag>;
const Num = ({ c, t }: { c: string; t: string }) => <span className={`flex h-[13px] w-[13px] shrink-0 items-center justify-center rounded-full text-[6px] font-bold text-white ${c}`}>{t}</span>;
const Southern = () => <Flag><rect width="14" height="14" fill="#1c3f8f" /><path d="M0 0L7 7M7 0L0 7" stroke="#fff" strokeWidth="2" /><path d="M3.500 0V7M0 3.500H7" stroke="#e04050" strokeWidth="1.500" /><circle cx="10" cy="5" r=".8" fill="#fff" /><circle cx="10" cy="10" r=".8" fill="#fff" /><circle cx="5" cy="10.500" r="1" fill="#fff" /></Flag>;
const groups: { h?: string; rows: [React.ReactNode, string][] }[] = [
  { rows: [[<Bars c="#c9971c" />, "GOLD"], [<Bars c="#c9971c" />, "XAUUSD"], [<Bars c="#c9971c" />, "XAUEUR"], [<Bars c="#a5a7a8" />, "XAGUSD"], [<Bars c="#a9a59a" />, "XPTUSD"], [<Flag><rect width="14" height="14" fill="#0a0a0a" /><path d="M7 2.500C9 6 10 7 10 8.700A3 3 0 0 1 4 8.700C4 7 5 6 7 2.500Z" fill="#fff" /></Flag>, "USOIL"]] },
  { h: "ÍNDICES", rows: [[<Flag><rect width="14" height="14" fill="#159060" /><path d="M9.500 4.800C8 3.200 4.500 3.800 4.800 5.600C5 7.300 9.200 6.500 9.200 8.600C9.200 10.500 6 10.700 4.500 9.200" fill="none" stroke="#fff" strokeWidth="1.500" /></Flag>, "DXY"], [<Num c="bg-[#1c95ab]" t="100" />, "NAS100"], [<Num c="bg-[#bb1640]" t="500" />, "SP500"], [<Flag><rect width="14" height="14" fill="#f2f2f2" /><path d="M0 2H14M0 6H14M0 10H14M0 13.500H14" stroke="#d8404e" strokeWidth="2" /><rect width="7" height="7" fill="#3f78d0" /></Flag>, "NAS"], [<Num c="bg-[#1ba3b8]" t="30" />, "US30"], [<Num c="bg-[#1ba3b8]" t="30" />, "US30"]] },
  { h: "FUTUROS", rows: [[<Southern />, "6A1!"], [<Flag><rect width="14" height="14" fill="#f4f4f4" /><circle cx="7" cy="7" r="3" fill="#d8284a" /></Flag>, "6J1!"], [<Flag><rect width="14" height="14" fill="#23468f" /><path d="M0 0L14 14M14 0L0 14M7 0V14M0 7H14" stroke="#fff" strokeWidth="3" /><path d="M7 0V14M0 7H14M0 0L14 14M14 0L0 14" stroke="#d8304a" strokeWidth="1.300" /></Flag>, "6B1!"], [<Flag><rect width="14" height="14" fill="#f4f4f4" /><path d="M0 0H3.500V14H0ZM10.500 0H14V14H10.500ZM7 4L8 6L10 6.500L8 9L7 10.500L6 9L4 6.500L6 6Z" fill="#d8284a" /></Flag>, "6C1!"], [<Flag><rect width="14" height="14" fill="#d8284a" /><path d="M7 3V11M3 7H11" stroke="#fff" strokeWidth="2.800" /></Flag>, "6S1!"], [<Southern />, "6N1!"]] },
  { h: "CRIPTO", rows: [[<Flag><rect width="14" height="14" fill="#ee8b22" /><path d="M5 4H8Q9.500 4 9.500 5.500Q9.500 7 8 7H5.500H8.200Q10 7 10 8.500Q10 10 8.200 10H5M6 3V11" stroke="#fff" fill="none" strokeWidth="1.200" /></Flag>, "BTCUSD"], [<Flag><circle cx="10" cy="4" r="4" fill="#27ac8c" /><circle cx="5" cy="9" r="5" fill="#e9b21c" stroke="#111" /><path d="M4 12V7H6.500V9.500H4" stroke="#222" fill="none" /></Flag>, "PONKE"], [<Flag><rect width="14" height="14" fill="#2c63c8" /><path d="M4.500 6H9.500M4.500 8.500H9.500" stroke="#fff" strokeDasharray="1 1" /></Flag>, "ADAUSD"], [<Flag><circle cx="10" cy="4" r="4" fill="#27ac8c" /><circle cx="5" cy="9" r="5" fill="#4b9a3c" stroke="#111" /></Flag>, "PEPE"]] },
];
const WatchList = () => (
  <aside className="relative ml-[3px] flex w-[46px] shrink-0 flex-col overflow-hidden bg-[#0d0d0d] text-[10px] font-semibold text-[#d6d6d6]">
    <div className="flex h-9 shrink-0 items-center justify-between pl-[11px]"><b className="text-[10px]">MET...</b><ChevronDown className="h-2 w-2 shrink-0" /></div>
    <div className="flex h-6 shrink-0 items-center gap-1 pl-[11px] text-[7px]">
      <span className="flex h-4 w-4 shrink-0 items-center justify-center rounded-full border border-[#3c3c3c]">F</span>
      <span className="flex h-4 w-4 shrink-0 items-center justify-center rounded-full bg-white text-black">M</span>
    </div>
    <div className="flex h-[23px] shrink-0 items-center gap-[3px] border-b border-[#2c2c2c] pt-1 font-normal text-[#85868a]">
      <svg viewBox="0 0 8 9" className="h-[9px] w-2 shrink-0"><path d="M0 0H8L6 4.500L8 9H0Z" fill="#5a5b5e" /></svg>Símbolo
    </div>
    <div className="h-1.5 shrink-0" />
    {groups.map((g, gi) => (
      <React.Fragment key={gi}>
        {g.h && <div className="flex h-7 shrink-0 items-center gap-[7px] pt-1 pl-3.5 text-[8px] font-normal text-[#77787b]"><ChevronDown className="h-2.5 w-2.5 shrink-0" />{g.h}</div>}
        {g.rows.map(([ic, t], i) => {
          const active = t === "NAS100";
          return (
            <a key={i} href="#chart" className={`relative flex h-[22px] shrink-0 items-center gap-1 ${active ? "rounded-l border border-r-0 border-[#9a9a9a] pl-[11px]" : "border-b border-[#1d1d1d] pl-3"}`}>
              {t === "XAUEUR" && <svg viewBox="0 0 8 10" className="absolute left-0 h-2.5 w-2"><path d="M0 0H8L6 5L8 10H0Z" fill="#2f6be0" /></svg>}
              {ic}{t}
            </a>
          );
        })}
      </React.Fragment>
    ))}
    <div className="absolute inset-x-0 bottom-0 h-[11px] border-t-2 border-[#2b2b2c] bg-[#0d0d0d]" />
  </aside>
);

const ranges = ["1D", "5D", "1M", "3M", "6M", "YTD", "1A", "5A", "Todos"];

export default function App() {
  return (
    <div className="flex h-screen w-full flex-col overflow-hidden bg-[#2b2b2c] font-['Open_Sans','Noto_Sans',sans-serif]">
      <nav className="relative flex h-7 shrink-0 items-center bg-[#3a3a3b] pt-1 text-[9px] font-medium text-[#e4e4e4]">
        <span className="absolute top-0 right-[67px] left-[91px] h-0.5 rounded-b border-b border-[#5c5c5e] bg-[#2c2c2d]" />
        <svg viewBox="0 0 14 12" className="ml-[7px] h-3 w-3.5" fill="none" stroke="#d0d0d0" strokeWidth="1.300"><rect x="1" y="2" width="10" height="6.500" rx="2" /><path d="M3.500 5.200H8.500M3 10.500H10Q12.500 10.500 12.500 7V5" /></svg>
        <span className="ml-[7px] h-3 w-px bg-[#5a5a5a]" />
        <div className="ml-2 flex">
          {bookmarks.map((b, i) => <a key={i} href="#bookmark" className={`flex shrink-0 items-center gap-[5px] whitespace-nowrap ${b.w}`}>{b.icon}{b.t}</a>)}
        </div>
      </nav>
      <TopBar />
      <div className="mt-0.5 flex min-h-0 flex-1">
        <Rail />
        <main className="ml-[3px] flex min-w-0 flex-1 flex-col">
          <Chart />
          <div className="flex h-7 shrink-0 items-center bg-[#0d0d0d] pt-0.5 pr-2 pl-[11px] text-[10px] font-medium text-[#d6d6d6]">
            <div className="flex gap-2">{ranges.map((r) => <button key={r}>{r}</button>)}</div>
            <span className="mr-2 ml-2"><Sep /></span>
            <button aria-label="Ir a la fecha"><Icon name="calendar" className="h-4 w-4" /></button>
            <span className="ml-auto">21:14:03 UTC-5</span>
          </div>
          <div className="mt-[3px] flex h-[25px] shrink-0 items-end rounded-t bg-[#0d0d0d] pr-[7px] text-[10px] font-medium text-[#d6d6d6]">
            <button className="h-6 w-[93px] pt-1 pl-3 text-left whitespace-nowrap">Editor de Pine</button>
            <button className="h-6 w-[91px] rounded-t bg-[#333334] pt-1 whitespace-nowrap text-white">Panel de trading</button>
            <div className="ml-auto flex items-center gap-4 pb-1">
              <button aria-label="Minimizar" className="h-3 w-2.5 border-b border-[#cfcfcf]" />
              <button aria-label="Maximizar"><Icon name="full" className="h-3.5 w-3.5" /></button>
            </div>
          </div>
        </main>
        <WatchList />
      </div>
    </div>
  );
}
